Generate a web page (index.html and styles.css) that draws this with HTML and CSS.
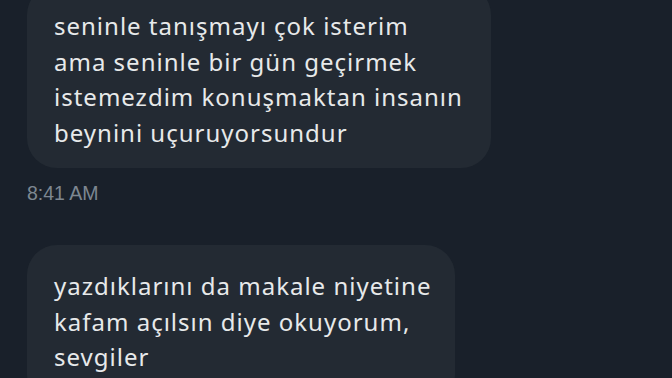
FILE: index.html
```html
<!DOCTYPE html>
<html lang="tr">
<head>
    <meta charset="UTF-8">
    <meta name="viewport" content="width=device-width, initial-scale=1.0">
    <title>Mesajlar</title>
    <link rel="stylesheet" href="styles.css">
</head>
<body>
    <div class="chat">
        <div class="message">
            <div class="bubble bubble-wide">
                seninle tanışmayı çok isterim<br>
                ama seninle bir gün geçirmek<br>
                istemezdim konuşmaktan insanın<br>
                beynini uçuruyorsundur
            </div>
            <div class="time">8:41 AM</div>
        </div>

        <div class="message">
            <div class="bubble bubble-narrow">
                yazdıklarını da makale niyetine<br>
                kafam açılsın diye okuyorum,<br>
                sevgiler
            </div>
        </div>
    </div>
</body>
</html>
```

FILE: styles.css
```css
body {
    margin: 0;
    padding: 0;
    background-color: #19202a;
    font-family: "Noto Sans", Arial, sans-serif;
    overflow: hidden;
}
.chat {
    margin-top: -15px;
    padding-left: 27px;
}
.message {
    margin-bottom: 40px;
}
.bubble {
    box-sizing: border-box;
    background-color: #232a33;
    color: #e7e9ea;
    font-size: 24px;
    letter-spacing: 1px;
    line-height: 35.5px;
    white-space: nowrap;
    padding: 23px 27px 18px;
    border-radius: 30px;
}
.bubble-wide {
    width: 464px;
}
.bubble-narrow {
    width: 428px;
    height: 160px;
}
.time {
    margin-top: 14px;
    font-family: "Liberation Sans", Arial, sans-serif;
    font-size: 19.5px;
    color: #7d8791;
}
```
